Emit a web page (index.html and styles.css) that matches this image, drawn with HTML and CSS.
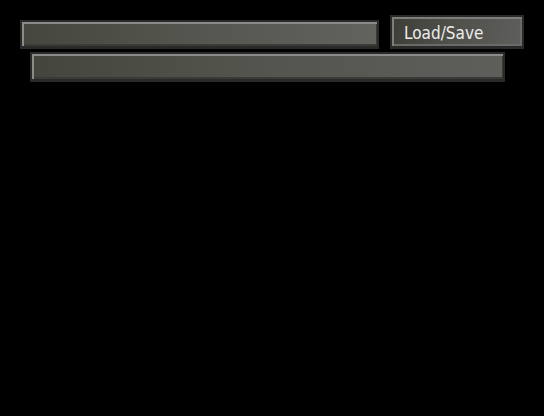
FILE: index.html
```html
<!DOCTYPE html>
<html>
<head>
<meta charset="utf-8">
<link rel="stylesheet" href="styles.css">
</head>
<body>
<div class="panel">
  <div class="row">
    <div class="field field-main"></div>
    <button class="btn">Load/Save</button>
  </div>
  <div class="field field-sub"></div>
</div>
</body>
</html>
```
FILE: styles.css
```css
html, body {
  margin: 0;
  background: #000;
  width: 544px;
  height: 416px;
  overflow: hidden;
}
.panel {
  display: flex;
  flex-direction: column;
  padding-top: 15px;
}
.row {
  display: flex;
  align-items: flex-end;
  gap: 11px;
  padding-left: 20px;
}
.field {
  box-sizing: border-box;
  border: 2px solid #2a2a2a;
  border-bottom-width: 3px;
  background: linear-gradient(90deg, #45463e 0%, #55564f 50%, #62625f 100%);
  box-shadow: inset 2px 2px 0 #8b8b89, inset -1px -2px 0 #3a3a37;
}
.field-main {
  width: 359px;
  height: 29px;
}
.field-sub {
  width: 475px;
  height: 30px;
  margin-left: 30px;
  margin-top: 3px;
  background: linear-gradient(90deg, #44453d 0%, #54554e 50%, #5e5e5b 100%);
}
.btn {
  box-sizing: border-box;
  width: 134px;
  height: 34px;
  margin: 0;
  padding: 1px 0 0 12px;
  text-align: left;
  border: 2px solid #2a2a2a;
  border-bottom-width: 3px;
  background: linear-gradient(100deg, #3d3e36 0%, #4f504a 45%, #5e5e5c 100%);
  box-shadow: inset 2px 2px 0 #7e7e7c, inset -2px -2px 0 #6a6a68;
  color: #ececec;
  font-family: "DejaVu Sans Condensed", "DejaVu Sans", sans-serif;
  font-size: 17px;
  line-height: 30px;
}
```
